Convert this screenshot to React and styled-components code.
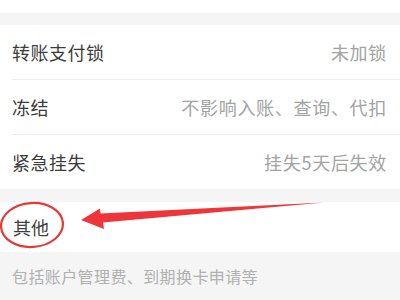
import React from 'react';
import styled, { createGlobalStyle } from 'styled-components';

const GlobalStyle = createGlobalStyle`
  html, body {
    margin: 0;
    padding: 0;
    background: #f5f5f5;
    overflow: hidden;
  }
  * { box-sizing: border-box; }
`;

const Page = styled.div`
  position: relative;
  width: 400px;
  height: 300px;
  background: #f5f5f5;
  font-family: "Noto Sans CJK SC", "Noto Sans", sans-serif;
  display: flex;
  flex-direction: column;
`;

const TopStrip = styled.div`
  height: 13px;
  background: #fff;
`;

const Gap = styled.div`
  height: ${p => p.$h}px;
  background: #f5f5f5;
`;

const List = styled.div`
  background: #fff;
  padding-left: 12px;
`;

const Row = styled.div`
  height: ${p => (p.$last ? 54 : 55)}px;
  display: flex;
  align-items: center;
  justify-content: space-between;
  padding-right: 13px;
  border-bottom: ${p => (p.$last ? 'none' : '1px solid #efefef')};
`;

const Label = styled.span`
  font-size: 18px;
  color: #3c3c3c;
  letter-spacing: 0.5px;
`;

const Value = styled.span`
  font-size: 18px;
  color: #a3a3a3;
  letter-spacing: 0.7px;
`;

const SectionHead = styled.div`
  height: 50px;
  background: #fff;
  display: flex;
  align-items: center;
  padding-left: 13px;
  font-size: 18px;
  color: #3f3f3f;
`;

const Note = styled.div`
  flex: 1;
  padding: 12px 0 0 12px;
  font-size: 16px;
  color: #b0b0b0;
  letter-spacing: 0.4px;
`;

const Annotation = styled.svg`
  position: absolute;
  left: 0;
  top: 0;
  pointer-events: none;
`;

const rows = [
  ['转账支付锁', '未加锁'],
  ['冻结', '不影响入账、查询、代扣'],
  ['紧急挂失', '挂失5天后失效'],
];

export default function App() {
  return (
    <Page>
      <GlobalStyle />
      <TopStrip />
      <Gap $h={12} />
      <List>
        {rows.map(([label, value], i) => (
          <Row key={label} $last={i === rows.length - 1}>
            <Label>{label}</Label>
            <Value>{value}</Value>
          </Row>
        ))}
      </List>
      <Gap $h={13} />
      <SectionHead>其他</SectionHead>
      <Note>包括账户管理费、到期换卡申请等</Note>

      {/* red annotation: circle round the heading and an arrow pointing at it */}
      <Annotation width="400" height="300" viewBox="0 0 400 300">
        <ellipse cx="32" cy="225" rx="31" ry="22" fill="none" stroke="#e53935" strokeWidth="2.2" transform="rotate(-4 32 225)" />
        <polygon
          points="81,220 100,208.5 100.5,213.5 324,202.5 103,222.5 104,229"
          fill="#f0353a"
        />
      </Annotation>
    </Page>
  );
}
